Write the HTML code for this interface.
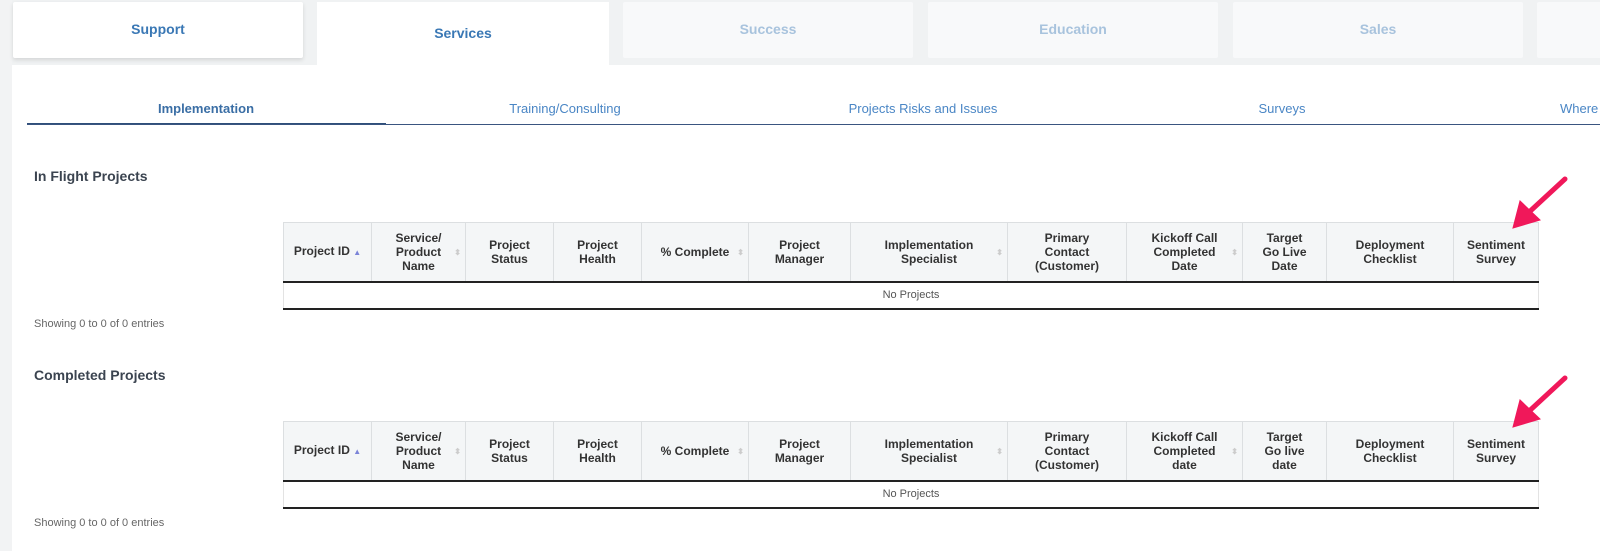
<!DOCTYPE html>
<html><head><meta charset="utf-8"><style>
*{margin:0;padding:0;box-sizing:border-box}
body{width:1600px;height:551px;background:#fff;font-family:"Liberation Sans",Arial,sans-serif;position:relative;overflow:hidden}
.strip{position:absolute;left:0;top:0;width:12px;height:551px;background:#f2f3f4}
.band{position:absolute;left:0;top:0;width:1600px;height:65px;background:#f0f2f3}
.tab{position:absolute;top:2px;height:56px;width:290px;background:#f8f9fa;border-radius:2px;color:#a8c3dd;font-weight:bold;font-size:14px;text-align:center;line-height:54px}
.tab.sup{background:#fff;color:#3a78b5;box-shadow:0 2px 4px rgba(0,0,0,.12)}
.tab.act{background:#fff;color:#3a78b5;height:63px;line-height:62px;border-radius:0}
.sub{position:absolute;top:101px;width:358px;text-align:center;font-size:13px;color:#4a86c5}
.sub.a{color:#3a6ea5;font-weight:bold}
.ul{position:absolute;left:27px;top:124px;width:1573px;height:1px;background:#3a5580}
.ula{position:absolute;left:27px;top:123px;width:359px;height:2px;background:#2f4f7a}
h3{position:absolute;left:34px;font-size:14px;font-weight:bold;color:#3b4450}
.show{position:absolute;left:34px;font-size:11px;color:#666}
table{position:absolute;left:283px;border-collapse:collapse;table-layout:fixed;width:1255px}
th{background:#f4f6f7;border:1px solid #dcdfe1;border-bottom:2px solid #222;font-size:12px;color:#333;font-weight:bold;height:59px;line-height:14px;padding:0 6px;text-align:center;position:relative}
td{height:27px;border-bottom:2px solid #222;border-left:1px solid #e3e3e3;border-right:1px solid #e3e3e3;text-align:center;font-size:11px;color:#555}
.s{position:absolute;right:4px;top:23px;font-size:8px;color:#ccc}
.up{color:#7b84d8}
</style></head><body>
<div class="band"></div>
<div class="strip"></div>
<div class="tab sup" style="left:13px">Support</div>
<div class="tab act" style="left:317px;width:292px">Services</div>
<div class="tab" style="left:623px">Success</div>
<div class="tab" style="left:928px">Education</div>
<div class="tab" style="left:1233px">Sales</div>
<div class="tab" style="left:1537px"></div>
<div class="sub a" style="left:27px">Implementation</div>
<div class="sub" style="left:386px">Training/Consulting</div>
<div class="sub" style="left:744px">Projects Risks and Issues</div>
<div class="sub" style="left:1103px">Surveys</div>
<div class="sub" style="left:1560px;width:100px;text-align:left">Where</div>
<div class="ula"></div><div class="ul"></div>

<h3 style="top:168px">In Flight Projects</h3>
<table style="top:222px">
<colgroup><col style="width:88px"><col style="width:94px"><col style="width:88px"><col style="width:88px"><col style="width:107px"><col style="width:102px"><col style="width:157px"><col style="width:119px"><col style="width:116px"><col style="width:84px"><col style="width:127px"><col style="width:85px"></colgroup>
<tr><th>Project ID <span class="s up" style="position:static">▲</span></th><th>Service/<br>Product<br>Name<span class="s">⬍</span></th><th>Project<br>Status</th><th>Project<br>Health</th><th>% Complete<span class="s">⬍</span></th><th>Project<br>Manager</th><th>Implementation<br>Specialist<span class="s">⬍</span></th><th>Primary<br>Contact<br>(Customer)</th><th>Kickoff Call<br>Completed<br>Date<span class="s">⬍</span></th><th>Target<br>Go Live<br>Date</th><th>Deployment<br>Checklist</th><th>Sentiment<br>Survey</th></tr>
<tr><td colspan="12">No Projects</td></tr>
</table>
<div class="show" style="top:318px">Showing 0 to 0 of 0 entries</div>

<h3 style="top:367px">Completed Projects</h3>
<table style="top:421px">
<colgroup><col style="width:88px"><col style="width:94px"><col style="width:88px"><col style="width:88px"><col style="width:107px"><col style="width:102px"><col style="width:157px"><col style="width:119px"><col style="width:116px"><col style="width:84px"><col style="width:127px"><col style="width:85px"></colgroup>
<tr><th>Project ID <span class="s up" style="position:static">▲</span></th><th>Service/<br>Product<br>Name<span class="s">⬍</span></th><th>Project<br>Status</th><th>Project<br>Health</th><th>% Complete<span class="s">⬍</span></th><th>Project<br>Manager</th><th>Implementation<br>Specialist<span class="s">⬍</span></th><th>Primary<br>Contact<br>(Customer)</th><th>Kickoff Call<br>Completed<br>date<span class="s">⬍</span></th><th>Target<br>Go live<br>date</th><th>Deployment<br>Checklist</th><th>Sentiment<br>Survey</th></tr>
<tr><td colspan="12">No Projects</td></tr>
</table>
<div class="show" style="top:517px">Showing 0 to 0 of 0 entries</div>

<svg style="position:absolute;left:0;top:0" width="1600" height="551">
<g fill="#f0185a" stroke="#f0185a" stroke-linecap="round">
<line x1="1565" y1="179" x2="1526" y2="215" stroke-width="5"/>
<polygon points="1513,228 1520,201 1540,220" stroke-width="1"/>
<line x1="1565" y1="378" x2="1526" y2="414" stroke-width="5"/>
<polygon points="1513,427 1520,400 1540,419" stroke-width="1"/>
</g></svg>
</body></html>
